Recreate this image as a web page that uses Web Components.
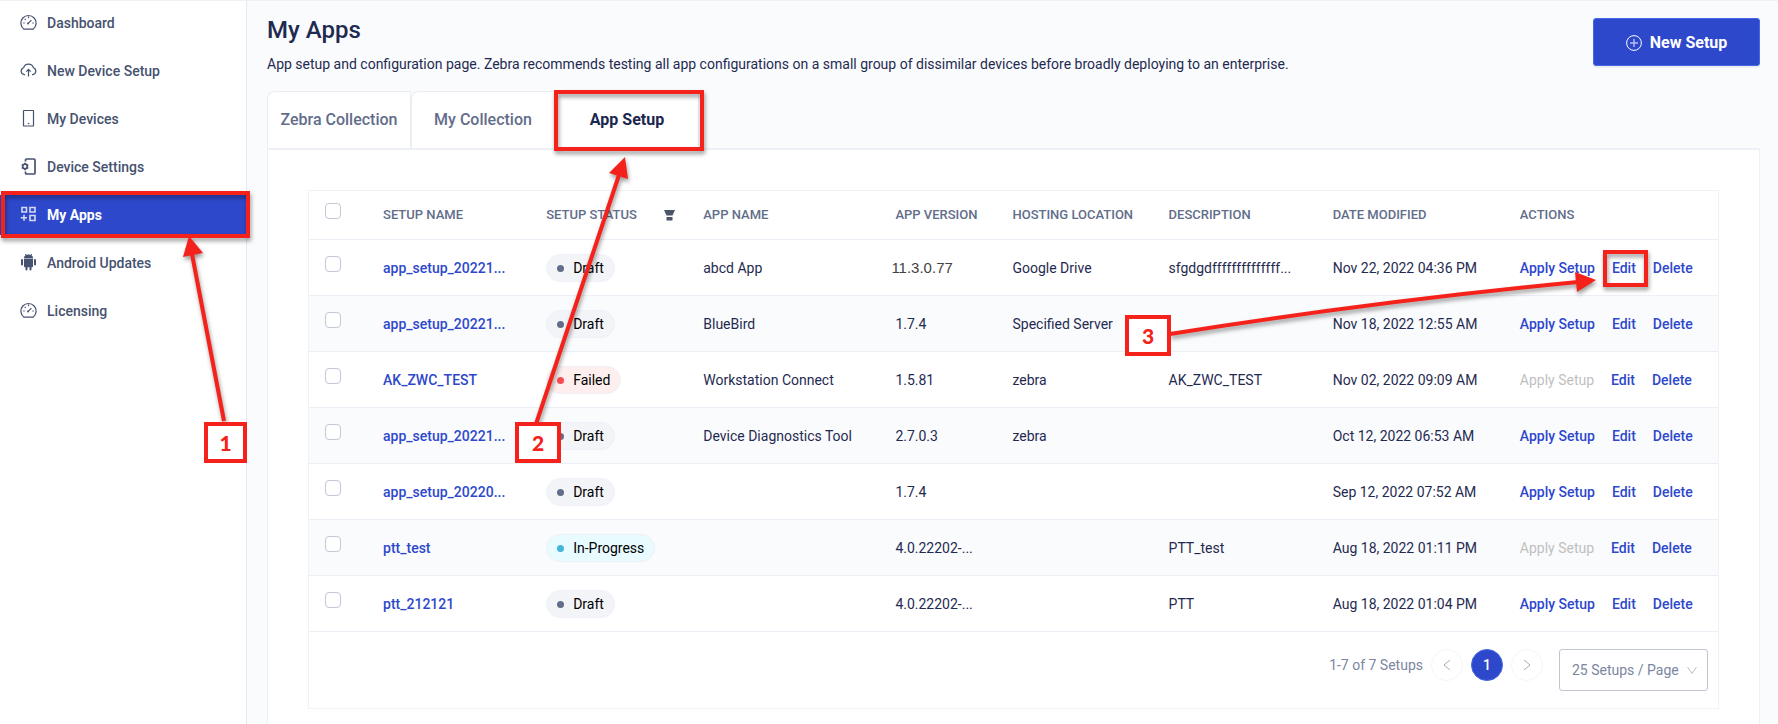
<!DOCTYPE html>
<html lang="en">
<head>
<meta charset="utf-8">
<title>My Apps</title>
<style>
body { margin: 0; background: #fff; font-family: Roboto, "Liberation Sans", sans-serif; font-size: 14px; line-height: 20px; color: #1f2a50; }
</style>
</head>
<body>
<app-shell>
  <side-nav slot="nav">
    <nav-item icon="gauge">Dashboard</nav-item>
    <nav-item icon="cloud">New Device Setup</nav-item>
    <nav-item icon="tablet">My Devices</nav-item>
    <nav-item icon="settings">Device Settings</nav-item>
    <nav-item icon="apps" active>My Apps</nav-item>
    <nav-item icon="android">Android Updates</nav-item>
    <nav-item icon="gauge">Licensing</nav-item>
  </side-nav>
  <page-header>
    <span slot="title">My Apps</span>
    App setup and configuration page. Zebra recommends testing all app configurations on a small group of dissimilar devices before broadly deploying to an enterprise.
    <primary-button slot="action">New Setup</primary-button>
  </page-header>
  <tab-strip>
    <tab-item>Zebra Collection</tab-item>
    <tab-item>My Collection</tab-item>
    <tab-item active>App Setup</tab-item>
  </tab-strip>
  <tab-panel>
    <setup-table></setup-table>
    <page-controls slot="footer"></page-controls>
  </tab-panel>
</app-shell>
<step-callouts></step-callouts>

<script>
const icons = {
  gauge: '<path d="M4 15.2A7.6 7.6 0 1 1 13 15.2Z" stroke-linejoin="round"/><path d="M8 9.6 11.4 6.2M8.5 2.6v1.6M3.2 9h1.5M12.3 9h1.5M4.7 4.9l1 1"/><circle cx="8" cy="9.6" r="1" fill="currentColor" stroke="none"/>',
  cloud: '<path d="M5 12.6H4.3A3.5 3.5 0 0 1 3.6 5.8A5.1 5.1 0 0 1 13.4 5.8A3.5 3.5 0 0 1 12.7 12.6H12"/><path d="M8.5 14.5V7.6M6.3 9.6 8.5 7.4 10.7 9.6"/>',
  tablet: '<rect x="3.5" y=".5" width="10" height="15.5" rx=".6"/><path d="M7.8 13.5h1.5"/>',
  settings: '<path d="M5.500 3.500V2a1 1 0 0 1 1-1H14a1 1 0 0 1 1 1v13a1 1 0 0 1-1 1H6.5a1 1 0 0 1-1-1v-1.500" stroke-width="1.7"/><circle cx="5" cy="8.500" r="2.300" stroke-width="1.700"/><path d="M5 4.800v1.200M5 11v1.200M1.700 6.600l1.200.6M7.100 9.800l1.200.6M1.700 10.400l1.200-.6M7.100 7.200l1.200-.6" stroke-width="1.600"/>',
  apps: '<path d="M2 1.5h4.5V6H2zM10 1.5h5V6h-5zM10 9.5h5V14.5h-5zM4 8.8v6M.8 11.8h6.2" stroke-width="1.6"/>',
  android: '<g fill="currentColor" stroke="none"><path d="M4 4.200A4.5 3.6 0 0 1 13 4.200ZM4 4.800h9v7.500a1 1 0 0 1-1 1H5a1 1 0 0 1-1-1z"/><rect x="1" y="5" width="2" height="6.500" rx="1"/><rect x="14" y="5" width="2" height="6.500" rx="1"/><rect x="5.500" y="11.500" width="2" height="5" rx="1"/><rect x="9.500" y="11.500" width="2" height="5" rx="1"/></g><path d="M5.200 0 6.300 1.600M11.800 0 10.700 1.600" stroke-width=".9"/>'
};
const define = (name, css, html) => {
  customElements.define(name, class extends HTMLElement {
    connectedCallback() {
      if (this.shadowRoot) return;
      const root = this.attachShadow({ mode: 'open' });
      root.innerHTML = `<style>:host,*{box-sizing:border-box}${css}</style>${typeof html === 'function' ? html(this) : html}`;
    }
  });
};

define('app-shell', `
  :host { display: grid; grid-template-columns: 247px minmax(0, 1fr); min-height: 100vh; overflow: hidden; }
  .nav { border-right: 1px solid #e6e8ef; background: #fff; }
  main { background: #fafbfd; border-top: 1px solid #f0f1f4; padding: 13px 18px 0 20px; display: flex; flex-direction: column; }
`, '<div class="nav"><slot name="nav"></slot></div><main><slot></slot></main>');

define('side-nav', `
  :host { display: block; }
  nav { display: flex; flex-direction: column; gap: 8px; padding-top: 2px; border-top: 1px solid #f0f1f4; }
`, '<nav><slot></slot></nav>');

define('nav-item', `
  :host { display: block; }
  a { display: flex; align-items: center; gap: 10px; height: 40px; padding-left: 20px; color: #46526f; font-weight: 500; text-decoration: none; }
  svg { width: 17px; height: 17px; margin-bottom: 2px; fill: none; stroke: currentColor; stroke-width: 1.2; }
  :host([active]) a { background: #2e48cb; color: #fff; font-weight: 700; }
  :host([active]) svg { opacity: .8; }
`, el => `<a href="#"><svg viewBox="0 0 17 17" aria-hidden="true">${icons[el.getAttribute('icon')]}</svg><span><slot></slot></span></a>`);

define('page-header', `
  :host { display: flex; justify-content: space-between; align-items: flex-start; margin-bottom: 17px; }
  h1 { margin: 0 0 8px; font-size: 24px; line-height: 32px; font-weight: 500; }
  p { margin: 0; }
  .action { padding-top: 4px; margin-bottom: -8px; }
`, '<div><h1><slot name="title"></slot></h1><p><slot></slot></p></div><div class="action"><slot name="action"></slot></div>');

define('primary-button', `
  :host { display: block; }
  button { display: flex; align-items: center; justify-content: center; gap: 8px; width: 167px; height: 48px; padding: 1px 0 0; border: 1px solid #4468e6; border-radius: 3px; background: #2e48cb; color: #fff; font: 700 16px/24px Roboto, sans-serif; box-shadow: 0 2px 1px #eceef2; }
  svg { width: 16px; height: 16px; fill: none; stroke: #fff; }
`, '<button type="button"><svg viewBox="0 0 16 16" aria-hidden="true"><circle cx="8" cy="8" r="7.4"/><path d="M8 4v8M4 8h8" stroke-width="1.4" opacity=".65"/></svg><slot></slot></button>');

define('tab-strip', `
  :host { display: block; }
  div { display: flex; }
`, '<div role="tablist"><slot></slot></div>');

define('tab-item', `
  :host { display: block; }
  button { width: 144px; height: 57px; padding: 0; border: 1px solid #ebedf3; border-bottom: 0; border-radius: 8px 0 0 0; background: #fff; color: #626d8a; font: 500 16px/24px Roboto, sans-serif; }
  :host([active]) button { color: #1b2650; font-weight: 700; }
`, el => `<button type="button" role="tab" aria-selected="${el.hasAttribute('active')}"><slot></slot></button>`);

define('tab-panel', `
  :host { flex: 1; display: block; padding: 40px 40px 0; background: #fff; border: solid #edf0f6; border-width: 2px 1px 0; }
  section { border: 1px solid #f0f2f6; }
`, '<section><slot></slot><slot name="footer"></slot></section>');

define('status-pill', `
  :host { display: inline-flex; align-items: center; gap: 9px; height: 28px; padding: 1px 10px 0; border: 1px solid #eef1f7; border-radius: 14px; background: #f3f4f7; color: #000; vertical-align: middle; }
  i { width: 7px; height: 7px; border-radius: 50%; background: #626d8a; }
  :host([kind="Failed"]) { background: #feefee; } :host([kind="Failed"]) i { background: #fa4b53; }
  :host([kind="In-Progress"]) { background: #e8fbff; } :host([kind="In-Progress"]) i { background: #42b6dc; }
`, '<i></i><slot></slot>');

const setups = [
  ['app_setup_20221...', 'Draft', 'abcd App', '11.3.0.77', 'Google Drive', 'sfgdgdffffffffffffff...', 'Nov 22, 2022 04:36 PM', 1],
  ['app_setup_20221...', 'Draft', 'BlueBird', '1.7.4', 'Specified Server', '', 'Nov 18, 2022 12:55 AM', 1],
  ['AK_ZWC_TEST', 'Failed', 'Workstation Connect', '1.5.81', 'zebra', 'AK_ZWC_TEST', 'Nov 02, 2022 09:09 AM', 0],
  ['app_setup_20221...', 'Draft', 'Device Diagnostics Tool', '2.7.0.3', 'zebra', '', 'Oct 12, 2022 06:53 AM', 1],
  ['app_setup_20220...', 'Draft', '', '1.7.4', '', '', 'Sep 12, 2022 07:52 AM', 1],
  ['ptt_test', 'In-Progress', '', '4.0.22202-...', '', 'PTT_test', 'Aug 18, 2022 01:11 PM', 0],
  ['ptt_212121', 'Draft', '', '4.0.22202-...', '', 'PTT', 'Aug 18, 2022 01:04 PM', 1]
];
define('setup-table', `
  :host { display: block; }
  table { width: 100%; table-layout: fixed; border-collapse: separate; border-spacing: 0; }
  th, td { padding: 0 0 0 16px; text-align: left; white-space: nowrap; border-bottom: 1px solid #ebf0f7; }
  th { height: 49px; font-size: 13px; font-weight: 500; color: #626d8a; }
  td { height: 56px; }
  tbody tr:nth-child(even) { background: #fafbfd; }
  a { color: #2e48cb; font-weight: 500; text-decoration: none; }
  input { appearance: none; display: block; width: 16px; height: 16px; margin: 0 0 8px; border: 1px solid #c3c8d6; border-radius: 4px; background: #fff; }
  .filter { display: flex; justify-content: space-between; align-items: center; padding-right: 12px; }
  .filter svg { width: 11px; height: 11px; fill: #4c5666; }
  .actions { display: flex; gap: 17px; }
  button { padding: 0; border: 0; background: none; color: #bfbfbf; font: inherit; }
  .plain { padding-left: 12px; font: 15px/20px "Liberation Sans", sans-serif; color: #444; }
`, () => `<table>
  <colgroup>${[58, 163, 157, 192, 117, 156, 164, 187, 214].map(w => `<col style="width:${w}px">`).join('')}</colgroup>
  <thead><tr><th><input type="checkbox" aria-label="Select all setups"></th><th>SETUP NAME</th>
  <th><span class="filter">SETUP STATUS<svg viewBox="0 0 11 11" aria-hidden="true"><path d="M0 0h11L8.5 5.5h-6zM2.5 7h6V10.5h-6z"/></svg></span></th>
  <th>APP NAME</th><th>APP VERSION</th><th>HOSTING LOCATION</th><th>DESCRIPTION</th><th>DATE MODIFIED</th><th>ACTIONS</th></tr></thead>
  <tbody>${setups.map(([name, status, app, version, host, desc, date, ready], i) => `<tr>
    <td><input type="checkbox" aria-label="Select ${name}"></td><td><a href="#">${name}</a></td>
    <td><status-pill kind="${status}">${status}</status-pill></td><td>${app}</td>
    <td${i ? '' : ' class="plain"'}>${version}</td><td>${host}</td><td>${desc}</td><td>${date}</td>
    <td><div class="actions">${ready ? '<a href="#">Apply Setup</a>' : '<button type="button" disabled>Apply Setup</button>'}<a href="#">Edit</a><a href="#">Delete</a></div></td></tr>`).join('')}
  </tbody></table>`);

define('page-controls', `
  :host { display: flex; justify-content: flex-end; align-items: flex-start; gap: 8px; height: 76px; padding: 17px 10px 0 0; color: #7b86a0; }
  .count { line-height: 32px; }
  button { width: 32px; height: 32px; padding: 0; border: 1px solid #f5f6fa; border-radius: 50%; background: #fff; color: #fff; font: 500 14px/20px Roboto, sans-serif; }
  .current { background: #2e48cb; border-color: #4468e6; }
  svg { display: block; fill: none; stroke: #a5a9b2; width: 10px; height: 10px; margin: auto; }
  .size { display: grid; margin-left: 8px; }
  .size > * { grid-area: 1 / 1; }
  select { appearance: none; width: 149px; height: 42px; padding: 0 12px; border: 1px solid #c0c5d3; border-radius: 3px; background: #fff; color: #7b86a0; font: 400 14px/20px Roboto, sans-serif; }
  .size svg { margin: auto 11px auto auto; pointer-events: none; stroke: #bfbfbf; }
`, `<span class="count">1-7 of 7 Setups</span>
  <button type="button" aria-label="Previous page"><svg viewBox="0 0 10 10"><path d="M8 0 2 5l6 5"/></svg></button>
  <button type="button" class="current" aria-current="page">1</button>
  <button type="button" aria-label="Next page"><svg viewBox="0 0 10 10"><path d="M2 0l6 5-6 5"/></svg></button>
  <label class="size"><select aria-label="Setups per page"><option>25 Setups / Page</option></select><svg viewBox="0 0 10 10" aria-hidden="true"><path d="M.5 2 5 8.5 9.5 2"/></svg></label>`);

define('step-callouts', `
  :host { position: absolute; left: 0; top: 0; width: 0; height: 0; pointer-events: none; }
  svg { position: absolute; left: 0; top: 0; width: 1px; height: 1px; overflow: visible; fill: none; stroke: #f5221b; stroke-width: 4; filter: drop-shadow(1px 3px 2px #0006); }
  .head { fill: #f5221b; stroke: none; }
  b { position: absolute; display: grid; place-items: center; width: 46px; height: 41px; border: 4px solid #f5221b; background: #fff; color: #f5221b; font: 900 21px/24px Lato, sans-serif; }
`, `<svg aria-hidden="true">
    <rect x="3" y="193" width="245" height="43"/><rect x="556" y="92" width="146" height="57"/><rect x="1605" y="252" width="41" height="33"/>
    <path d="M224 421 192 254M536 424 619 175M1170 334Q1371 302 1578 282"/>
    <path class="head" d="M189 236 183 257 203 253ZM625 157 609 173 628 179ZM1596 280 1575 272 1577 292Z"/>
  </svg>
  <b style="left:204px;top:422px;width:43px">1</b><b style="left:515px;top:422px">2</b><b style="left:1125px;top:315px">3</b>`);
</script>
</body>
</html>
